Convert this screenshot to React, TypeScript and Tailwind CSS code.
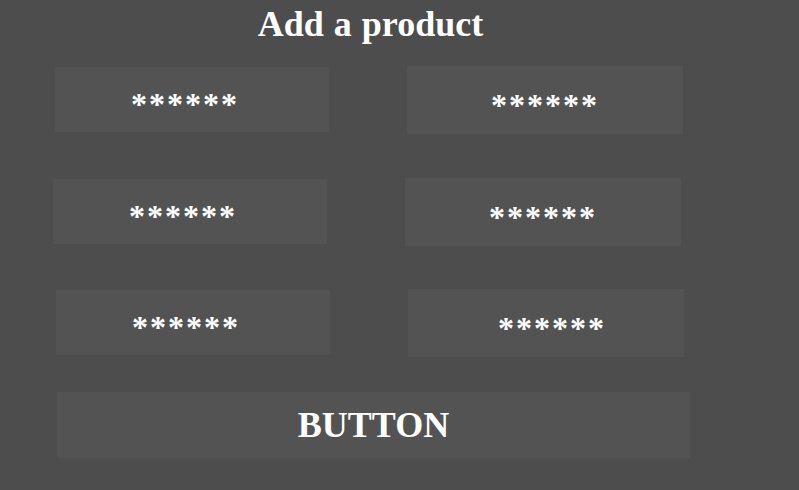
const serif = "font-['Liberation_Serif','Times_New_Roman',serif]";

const rows = [
  [
    { box: "ml-[55px] mt-[1px] w-[274px] h-[65px]", pad: "pl-[76px]" },
    { box: "ml-[78px] w-[276px] h-[68px]", pad: "pl-[84px]" },
  ],
  [
    { box: "ml-[53px] mt-[1px] w-[274px] h-[65px]", pad: "pl-[76px]" },
    { box: "ml-[78px] w-[276px] h-[68px]", pad: "pl-[84px]" },
  ],
  [
    { box: "ml-[56px] mt-[1px] w-[274px] h-[65px]", pad: "pl-[76px]" },
    { box: "ml-[78px] w-[276px] h-[68px]", pad: "pl-[90px]" },
  ],
];

const Field = ({ box, pad }: { box: string; pad: string }) => {
  return (
    <div className={`flex items-center bg-[#535353] ${box} ${pad}`}>
      <span className="pt-[9px] text-[32px] leading-none font-bold tracking-[2px] text-white">
        ******
      </span>
    </div>
  );
};

export default function App() {
  return (
    <div className={`h-[490px] w-full bg-[#4d4d4d] ${serif}`}>
      <div className="flex h-[66px] w-[634px] ml-[55px] justify-center pt-[6px]">
        <h1 className="-ml-[3px] text-[36px] leading-none font-bold text-white [word-spacing:1px]">
          Add a product
        </h1>
      </div>

      {rows.map((row, index) => (
        <div
          key={index}
          className={`flex ${index === 0 ? "" : index === 1 ? "mt-[44px]" : "mt-[43px]"}`}
        >
          {row.map((field, i) => (
            <Field key={i} box={field.box} pad={field.pad} />
          ))}
        </div>
      ))}

      <button
        type="button"
        className="mt-[35px] ml-[57px] flex h-[66px] w-[633px] items-center justify-center bg-[#535353]"
      >
        <span className="text-[36px] leading-none font-bold text-white">
          BUTTON
        </span>
      </button>
    </div>
  );
}
